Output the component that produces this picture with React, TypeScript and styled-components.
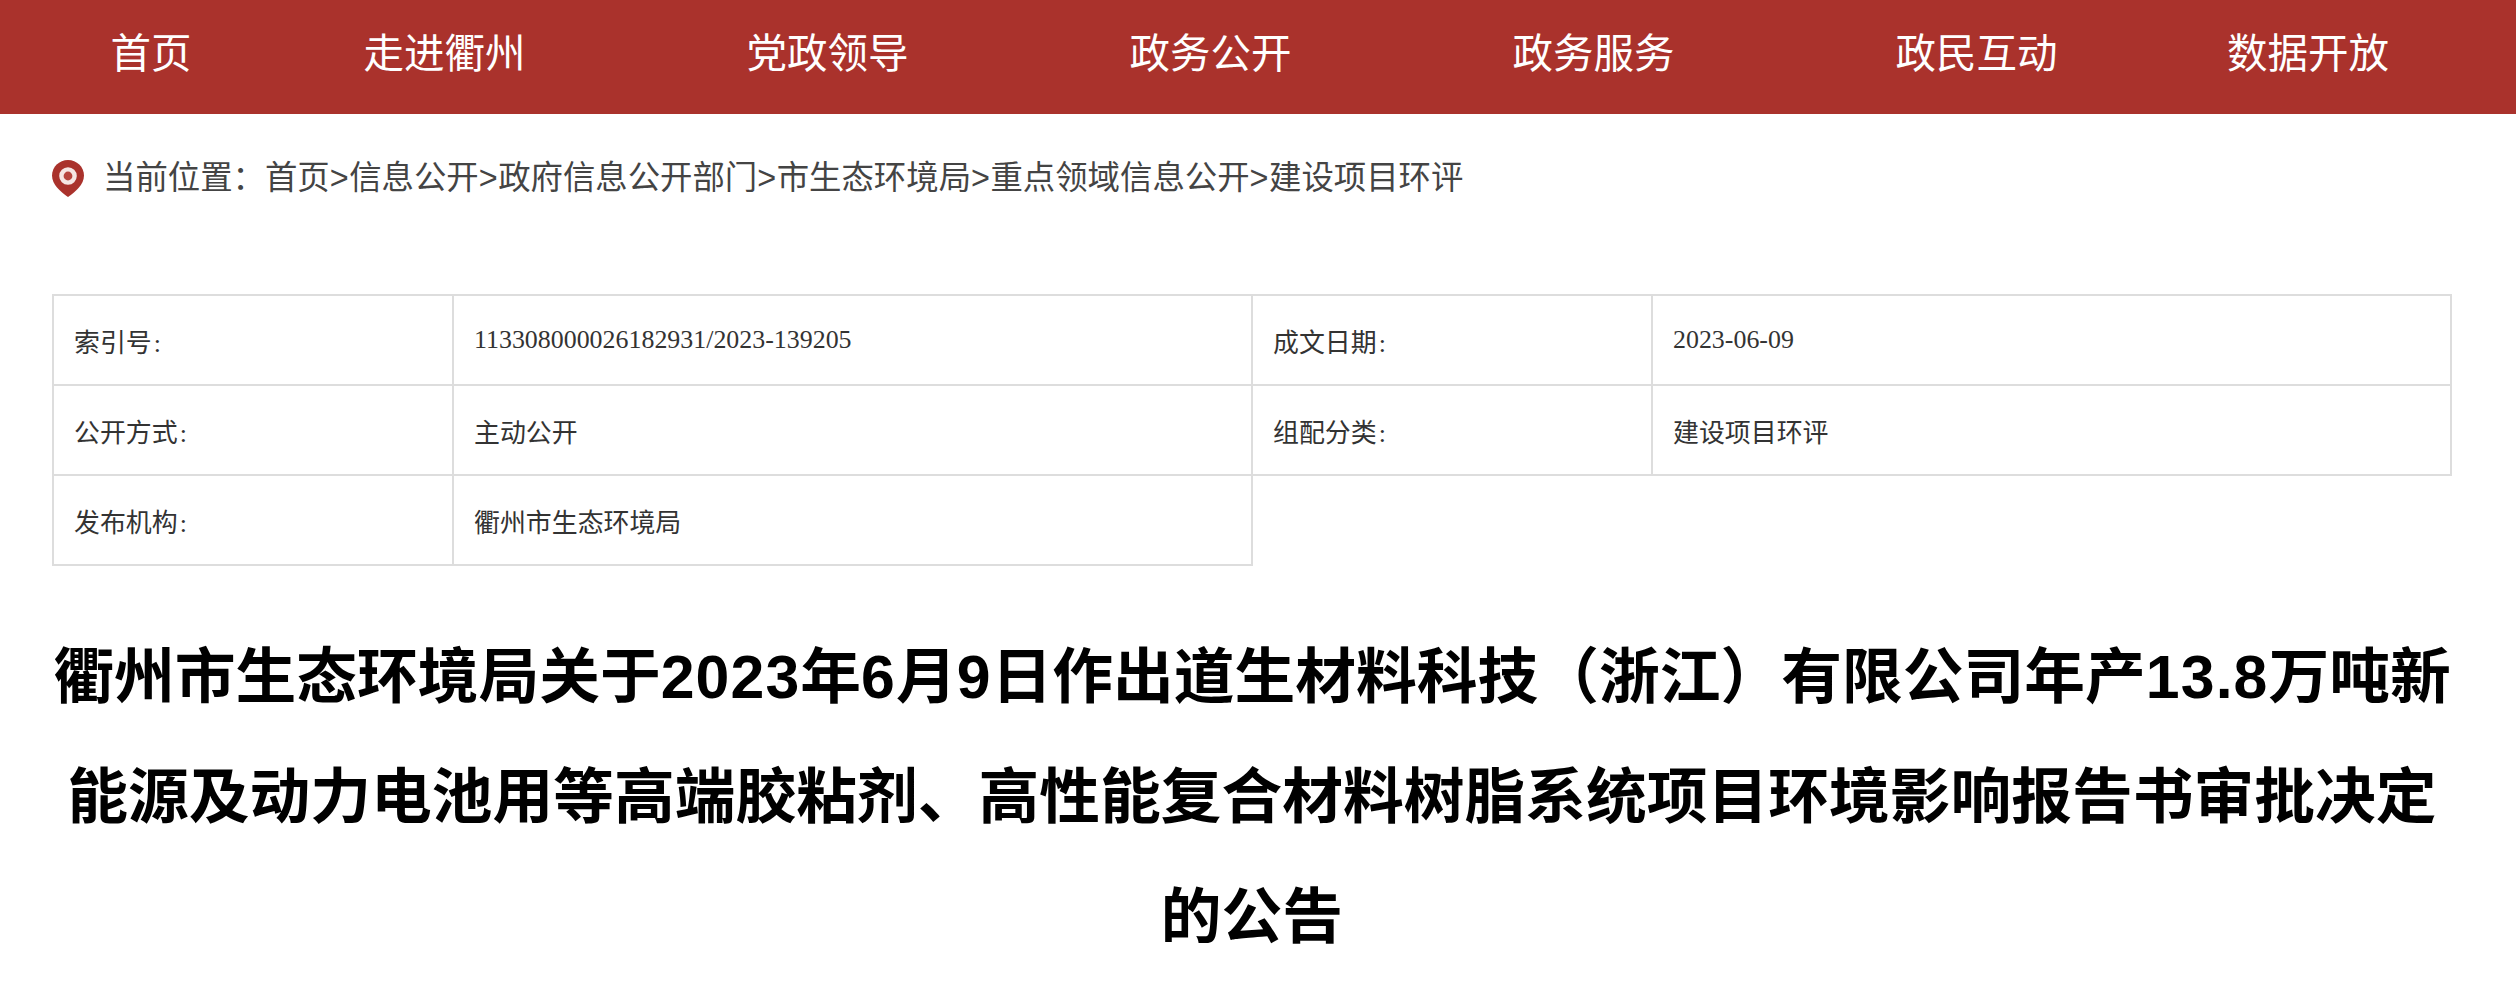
import React from "react";
import styled, { createGlobalStyle } from "styled-components";

const SANS = `"Liberation Sans", "Noto Sans CJK SC", sans-serif`;
const SERIF = `"Liberation Serif", "Noto Sans CJK SC", serif`;

const navItems = ["首页", "走进衢州", "党政领导", "政务公开", "政务服务", "政民互动", "数据开放"];

const crumbs = ["首页", "信息公开", "政府信息公开部门", "市生态环境局", "重点领域信息公开", "建设项目环评"];

const metaRows = [
  [
    { label: "索引号", value: "113308000026182931/2023-139205" },
    { label: "成文日期", value: "2023-06-09" },
  ],
  [
    { label: "公开方式", value: "主动公开" },
    { label: "组配分类", value: "建设项目环评" },
  ],
  [{ label: "发布机构", value: "衢州市生态环境局" }],
];

const App = () => {
  return (
    <Page>
      <GlobalStyle />
      <Nav>
        {navItems.map((item) => (
          <NavItem key={item}>{item}</NavItem>
        ))}
      </Nav>
      <Content>
        <Breadcrumb>
          <PinIcon viewBox="0 0 32 37">
            <path
              d="M16 0C7.2 0 0 6.9 0 15.6c0 9 8.6 16.5 16 21.4 7.4-4.9 16-12.4 16-21.4C32 6.9 24.8 0 16 0z"
              fill="#aa322c"
            />
            <circle cx="16" cy="16" r="6.6" fill="#b8463f" stroke="#f6e6e4" strokeWidth="4.4" />
          </PinIcon>
          <CrumbText>
            当前位置：
            {crumbs.map((crumb, i) => (
              <React.Fragment key={crumb}>
                {i > 0 && <CrumbSep>&gt;</CrumbSep>}
                {crumb}
              </React.Fragment>
            ))}
          </CrumbText>
        </Breadcrumb>
        <MetaTable>
          <colgroup>
            <col width="400" />
            <col width="799" />
            <col width="400" />
            <col width="799" />
          </colgroup>
          <tbody>
            {metaRows.map((row) => (
              <tr key={row[0].label}>
                {row.map((cell) => (
                  <React.Fragment key={cell.label}>
                    <LabelCell>
                      {cell.label}
                      <Colon>:</Colon>
                    </LabelCell>
                    <ValueCell>{cell.value}</ValueCell>
                  </React.Fragment>
                ))}
              </tr>
            ))}
          </tbody>
        </MetaTable>
        <Title>
          <TitleLine>
            衢州市生态环境局关于<Latin>2023</Latin>年<Latin>6</Latin>月<Latin>9</Latin>
            日作出道生材料科技（浙江）有限公司年产<Latin>13.8</Latin>万吨新
          </TitleLine>
          能源及动力电池用等高端胶粘剂、高性能复合材料树脂系统项目环境影响报告书审批决定的公告
        </Title>
      </Content>
    </Page>
  );
};

const GlobalStyle = createGlobalStyle`
  html, body {
    margin: 0;
    padding: 0;
    background: #fff;
    overflow: hidden;
  }
`;

const Page = styled.div`
  width: 2516px;
  height: 998px;
  overflow: hidden;
  font-family: ${SANS};
`;

const Nav = styled.ul`
  display: grid;
  grid-template-columns: 204px repeat(5, 383px) 280px;
  align-items: center;
  height: 114px;
  margin: 0;
  padding: 0 0 6px 49px;
  box-sizing: border-box;
  list-style: none;
  background: #aa322c;
`;

const NavItem = styled.li`
  font-size: 40.5px;
  line-height: 48px;
  color: #fff;
  text-align: center;
  white-space: nowrap;
`;

const Content = styled.div`
  width: 2398px;
  margin-left: 52px;
`;

const Breadcrumb = styled.div`
  display: flex;
  align-items: center;
  gap: 19px;
  height: 180px;
  padding-bottom: 52px;
  box-sizing: border-box;
`;

const PinIcon = styled.svg`
  flex: none;
  width: 32px;
  height: 37px;
`;

const CrumbText = styled.span`
  font-size: 32.4px;
  line-height: 40px;
  color: #444;
  white-space: nowrap;
`;

const CrumbSep = styled.span`
  letter-spacing: 0.5px;
`;

const MetaTable = styled.table`
  width: 2398px;
  table-layout: fixed;
  border-collapse: collapse;
  font-family: ${SERIF};
  font-size: 25.92px;
  color: #333;
`;

const LabelCell = styled.td`
  height: 90px;
  padding: 0 0 0 20px;
  box-sizing: border-box;
  border: 2px solid #ddd;
`;

const ValueCell = styled(LabelCell)``;

const Colon = styled.span`
  margin-left: 2px;
`;

const Title = styled.h1`
  margin: 51px -12px 0 -10px;
  font-size: 60.75px;
  line-height: 120px;
  font-weight: 700;
  color: #000;
  text-align: center;
`;

const TitleLine = styled.span`
  display: block;
`;

const Latin = styled.span`
  letter-spacing: 1.1px;
`;

export default App;
